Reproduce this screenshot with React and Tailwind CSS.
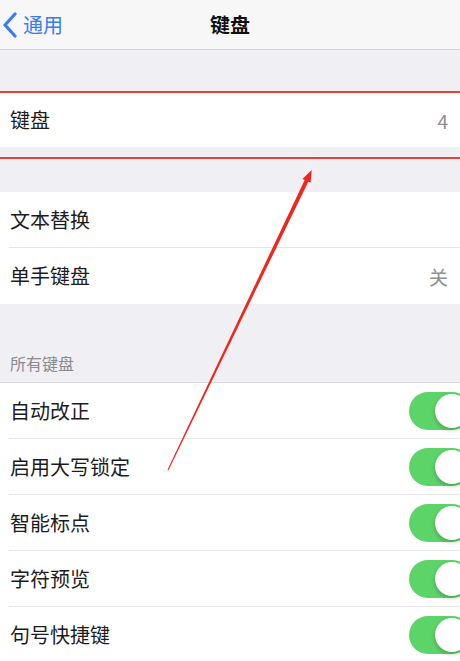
const font = { fontFamily: '"Noto Sans CJK SC", "Noto Sans", sans-serif' };

function Row({ label, value, toggle, divider }) {
  return (
    <div className="relative flex h-[56px] items-center justify-between bg-white pl-[10px] pr-[12px]">
      <span className="text-[20px] leading-none text-[#1c1c1e]">{label}</span>
      {value && <span className="text-[19px] leading-none text-[#8e8e93]">{value}</span>}
      {toggle && (
        <div className="relative -mr-[23px] h-[38px] w-[62px] shrink-0 rounded-full bg-[#5cd468]">
          <div className="absolute right-[2px] top-[2px] h-[34px] w-[34px] rounded-full bg-white shadow-[0_2px_4px_rgba(0,0,0,0.25)]" />
        </div>
      )}
      {divider && <div className="absolute bottom-0 left-[9px] right-0 h-px bg-[#e6e6ea]" />}
    </div>
  );
}

export default function App() {
  return (
    <div className="relative h-[661px] w-[460px] overflow-hidden bg-[#efeff4]" style={font}>
      <div className="relative flex h-[50px] items-center justify-center border-b border-[#d4d4d8] bg-[#f7f7f8]">
        <div className="absolute left-0 top-0 flex h-full items-center pl-[2px] text-[#3a7cf0]">
          <svg width="16" height="26" viewBox="0 0 16 26" fill="none">
            <path d="M13 2 L3 13 L13 24" stroke="currentColor" strokeWidth="3.2" strokeLinecap="round" strokeLinejoin="round" />
          </svg>
          <span className="ml-[5px] text-[20px] leading-none">通用</span>
        </div>
        <span className="text-[20px] font-bold leading-none text-[#111]">键盘</span>
      </div>

      <div className="h-[43px]" />
      <div className="flex h-[54px] items-center justify-between bg-white pl-[10px] pr-[12px]">
        <span className="text-[20px] leading-none text-[#1c1c1e]">键盘</span>
        <span className="text-[19px] leading-none text-[#8e8e93]">4</span>
      </div>

      <div className="h-[45px]" />
      <Row label="文本替换" divider />
      <Row label="单手键盘" value="关" />

      <div className="flex h-[78px] items-end pb-[11px] pl-[10px]">
        <span className="text-[16px] leading-none text-[#8a8a8f]">所有键盘</span>
      </div>
      <div className="border-t border-[#dcdce0]">
        <Row label="自动改正" toggle divider />
        <Row label="启用大写锁定" toggle divider />
        <Row label="智能标点" toggle divider />
        <Row label="字符预览" toggle divider />
        <Row label="句号快捷键" toggle />
      </div>

      <div className="absolute left-0 right-0 top-[91px] h-[2px] bg-[#e8403a]" />
      <div className="absolute left-0 right-0 top-[157px] h-[2px] bg-[#e8403a]" />
      <svg className="pointer-events-none absolute left-0 top-0" width="460" height="661" viewBox="0 0 460 661">
        <path d="M167.5 469.7 L168.5 470.3 L308.3 181.7 L310.6 182.7 L311.7 170 L302.4 178.9 L304.7 179.9 Z" fill="#f0261c" />
      </svg>
    </div>
  );
}
